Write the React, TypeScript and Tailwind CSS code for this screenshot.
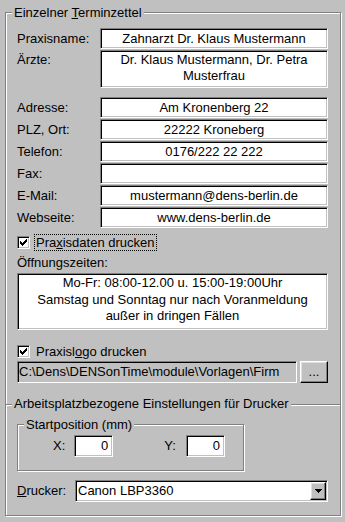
import React from "react";

// classic win9x 3D borders
const sunken =
  "border border-t-[#808080] border-l-[#808080] border-r-white border-b-white shadow-[inset_1px_1px_0_#000,inset_-1px_-1px_0_#c0c0c0]";
const raised =
  "border border-t-white border-l-white border-r-black border-b-black shadow-[inset_-1px_-1px_0_#808080,inset_1px_1px_0_#dfdfdf]";
const etched =
  "border border-[#808080] shadow-[inset_1px_1px_0_#fff,1px_1px_0_#fff]";

const FIELDS = [
  { label: "Adresse:", value: "Am Kronenberg 22" },
  { label: "PLZ, Ort:", value: "22222 Kroneberg" },
  { label: "Telefon:", value: "0176/222 22 222" },
  { label: "Fax:", value: "" },
  { label: "E-Mail:", value: "mustermann@dens-berlin.de" },
  { label: "Webseite:", value: "www.dens-berlin.de" },
];

function CheckMark() {
  // 7x7 pixel check
  const cols = [2, 3, 4, 3, 2, 1, 0];
  return (
    <svg width="7" height="7" viewBox="0 0 7 7" shapeRendering="crispEdges">
      {cols.map((y, x) => (
        <rect key={x} x={x} y={y} width="1" height="3" fill="#000" />
      ))}
    </svg>
  );
}

function Checkbox() {
  return (
    <span
      className={`flex h-[13px] w-[13px] shrink-0 items-center justify-center bg-white ${sunken}`}
    >
      <CheckMark />
    </span>
  );
}

function FieldRow({ label, value }: { label: string; value: string }) {
  return (
    <div className="flex h-[21px]">
      <span className="w-[83px] leading-[21px]">{label}</span>
      <div
        className={`flex-1 bg-white text-center leading-[19px] ${sunken}`}
      >
        {value}
      </div>
    </div>
  );
}

function NumBox() {
  return (
    <div
      className={`h-[22px] w-[39px] bg-white pr-[4px] text-right leading-[20px] ${sunken}`}
    >
      0
    </div>
  );
}

export default function App() {
  return (
    <div className="h-[522px] w-[345px] overflow-hidden bg-[#c0c0c0] pl-[5px] pt-[5px] font-['Liberation_Sans',Arial,sans-serif] text-[13px] text-black">
      <fieldset className={`h-[511px] w-[336px] min-w-0 ${etched}`}>
        <legend className="ml-[6px] bg-[#c0c0c0] px-[2px] leading-[15px]">
          Einzelner <span className="underline">T</span>erminzettel
        </legend>

        <div className="flex flex-col pl-[11px] pr-[12px] pt-[8px]">
          {/* Praxis */}
          <div className="flex flex-col gap-[1px]">
            <FieldRow label="Praxisname:" value="Zahnarzt Dr. Klaus Mustermann" />
            <div className="flex h-[38px]">
              <span className="w-[83px] pt-[2px] leading-4">Ärzte:</span>
              <div
                className={`flex-1 bg-white pt-[1px] text-center leading-4 ${sunken}`}
              >
                Dr. Klaus Mustermann, Dr. Petra
                <br />
                Musterfrau
              </div>
            </div>
          </div>

          <div className="mt-[9px] flex flex-col gap-[1px]">
            {FIELDS.map((f) => (
              <FieldRow key={f.label} label={f.label} value={f.value} />
            ))}
          </div>

          {/* Praxisdaten drucken */}
          <div className="mt-[6px] flex h-[17px] items-center">
            <Checkbox />
            <span className="ml-[4px] border border-dotted border-black px-[1px] leading-[15px]">
              Pra<span className="underline">x</span>isdaten drucken
            </span>
          </div>

          <div className="mt-[4px] leading-4">Öffnungszeiten:</div>
          <div
            className={`mt-[2px] h-[57px] bg-white pt-[1px] text-center leading-[16.5px] ${sunken}`}
          >
            Mo-Fr: 08:00-12.00 u. 15:00-19:00Uhr
            <br />
            Samstag und Sonntag nur nach Voranmeldung
            <br />
            außer in dringen Fällen
          </div>

          {/* Praxislogo */}
          <div className="mt-[13px] flex h-[17px] items-center">
            <Checkbox />
            <span className="ml-[5px] px-[1px] leading-[15px]">
              Praxisl<span className="underline">o</span>go drucken
            </span>
          </div>
          <div className="mt-[1px] flex h-[22px] gap-[3px]">
            <div
              className={`w-[280px] overflow-hidden whitespace-nowrap pl-[1px] leading-[20px] ${sunken}`}
            >
              C:\Dens\DENSonTime\module\Vorlagen\Firm
            </div>
            <button
              className={`flex-1 bg-[#c0c0c0] leading-[18px] ${raised}`}
            >
              ...
            </button>
          </div>

          {/* Arbeitsplatz */}
          <div className="-ml-[11px] -mr-[12px] mt-[13px] flex h-[15px] items-start">
            <div className="mt-[8px] h-[2px] w-[6px] border-t border-b border-t-[#808080] border-b-white" />
            <span className="px-[2px] leading-[15px]">
              Arbeitsplatzbezogene Einstellungen für Drucker
            </span>
            <div className="mt-[8px] h-[2px] flex-1 border-t border-b border-t-[#808080] border-b-white" />
          </div>

          <fieldset className={`mt-[6px] h-[54px] w-[227px] min-w-0 ${etched}`}>
            <legend className="ml-[6px] bg-[#c0c0c0] px-[2px] leading-[15px]">
              Startposition (mm)
            </legend>
            <div className="flex items-center pl-[35px] pt-[3px]">
              <span>X:</span>
              <div className="ml-[9px]">
                <NumBox />
              </div>
              <span className="ml-[51px]">Y:</span>
              <div className="ml-[10px]">
                <NumBox />
              </div>
            </div>
          </fieldset>

          {/* Drucker */}
          <div className="mt-[9px] flex h-[22px] items-center">
            <span className="w-[58px]">
              <span className="underline">D</span>rucker:
            </span>
            <div
              className={`flex h-[22px] flex-1 items-stretch bg-white ${sunken}`}
            >
              <span className="flex-1 pl-[2px] leading-[20px]">
                Canon LBP3360
              </span>
              <span
                className={`my-[1px] mr-[1px] flex w-[16px] items-center justify-center bg-[#c0c0c0] ${raised}`}
              >
                <svg width="7" height="4" viewBox="0 0 7 4" shapeRendering="crispEdges">
                  <path d="M0 0H7V1H6V2H5V3H4V4H3V3H2V2H1V1H0Z" fill="#000" />
                </svg>
              </span>
            </div>
          </div>
        </div>
      </fieldset>
    </div>
  );
}
